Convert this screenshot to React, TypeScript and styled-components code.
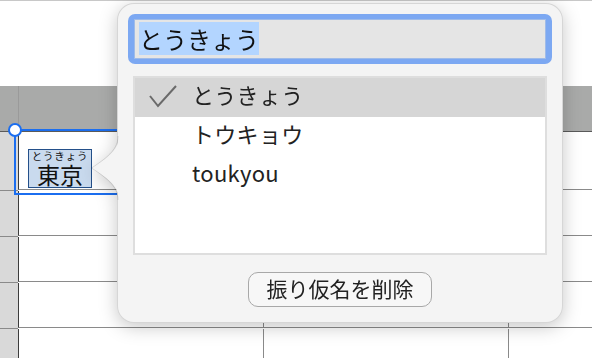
import { createGlobalStyle } from 'styled-components';
import styled from 'styled-components';

const GlobalStyle = createGlobalStyle`
  html, body {
    margin: 0;
    padding: 0;
    background: #ffffff;
    overflow: hidden;
  }
  body {
    font-family: "Noto Sans CJK JP", "Noto Sans", sans-serif;
  }
`;

const candidates = ['とうきょう', 'トウキョウ', 'toukyou'];

const App = () => {
  return (
    <Page>
      <GlobalStyle />
      <TopArea />
      <Sheet>
        <HeaderCell className="corner" />
        <HeaderCell />
        <HeaderCell />
        <HeaderCell />
        {[59, 46, 46, 46, 46].map((h, r) => (
          <Row key={r} $h={h}>
            <RowHead />
            <Cell>
              {r === 0 ? (
                <RubyBox>
                  <Reading>とうきょう</Reading>
                  <Base>東京</Base>
                </RubyBox>
              ) : null}
            </Cell>
            <Cell />
            <Cell />
          </Row>
        ))}
      </Sheet>

      <Selection />
      <Handle />

      <Popover>
        <Arrow width="28" height="64" viewBox="0 0 28 64">
          <path d="M28 0 C28 12 20 20 1 32 C20 44 28 52 28 64 Z" fill="#f4f4f4" />
          <path d="M27 0 C27 12 19 20 0.5 32 C19 44 27 52 27 64" fill="none" stroke="rgba(0,0,0,0.12)" />
        </Arrow>
        <Panel>
          <FieldRing>
            <Field>
              <Selected>とうきょう</Selected>
            </Field>
          </FieldRing>
          <List>
            {candidates.map((c, i) => (
              <Item key={c} $active={i === 0}>
                {i === 0 ? (
                  <Check width="30" height="24" viewBox="0 0 30 24">
                    <polyline points="2,11 10,21 28,1" fill="none" stroke="#6a6a6a" strokeWidth="2" />
                  </Check>
                ) : null}
                <span>{c}</span>
              </Item>
            ))}
          </List>
          <RemoveButton>振り仮名を削除</RemoveButton>
        </Panel>
      </Popover>
    </Page>
  );
};

const Page = styled.div`
  position: relative;
  width: 592px;
  height: 358px;
  overflow: hidden;
  background: #fff;
`;

const TopArea = styled.div`
  height: 85px;
  border-top: 1px solid #c8c8c8;
  background: #fff;
`;

const Sheet = styled.div`
  display: grid;
  grid-template-columns: 18px 245px 245px 1fr;
`;

const HeaderCell = styled.div`
  height: 45px;
  background: #a9aaa9;
  border-bottom: 1px solid #5a5a5a;
  border-left: 1px solid #9a9a9a;
  &.corner {
    border-left: none;
  }
`;

const Row = styled.div<{ $h: number }>`
  display: contents;
  > div {
    height: ${(p) => p.$h - 1}px;
  }
`;

const RowHead = styled.div`
  background: #d9d9d9;
  border-bottom: 1px solid #8a8a8a;
`;

const Cell = styled.div`
  background: #fff;
  border-left: 1px solid #8a8a8a;
  border-bottom: 1px solid #8a8a8a;
  padding: 9px 0 0 9px;
  box-sizing: border-box;
  &:nth-child(2) {
    border-left: 1px solid #3c3c3c;
  }
`;

const RubyBox = styled.div`
  display: inline-flex;
  flex-direction: column;
  align-items: center;
  width: 64px;
  box-sizing: border-box;
  padding-bottom: 1px;
  background: #c9daee;
  border: 1px solid #24508a;
  color: #111;
`;

const Reading = styled.span`
  font-size: 10.5px;
  line-height: 12px;
  letter-spacing: 0.8px;
`;

const Base = styled.span`
  font-size: 23px;
  line-height: 24px;
`;

const Selection = styled.div`
  position: absolute;
  left: 14px;
  top: 129px;
  width: 110px;
  height: 62px;
  border: 2px solid #1b6ef0;
`;

const Handle = styled.div`
  position: absolute;
  left: 8px;
  top: 123px;
  width: 10px;
  height: 10px;
  border-radius: 50%;
  background: #fff;
  border: 2px solid #1b6ef0;
`;

const Popover = styled.div`
  position: absolute;
  left: 117px;
  top: 3px;
  width: 446px;
  height: 320px;
  filter: drop-shadow(0 4px 9px rgba(0, 0, 0, 0.22));
`;

const Arrow = styled.svg`
  position: absolute;
  left: -26px;
  top: 133px;
  z-index: 2;
`;

const Panel = styled.div`
  box-sizing: border-box;
  height: 100%;
  background: #f4f4f4;
  border: 1px solid rgba(0, 0, 0, 0.12);
  border-radius: 17px;
  padding: 10px 10px;
  display: flex;
  flex-direction: column;
  align-items: center;
`;

const FieldRing = styled.div`
  align-self: stretch;
  background: #7ca8f2;
  border-radius: 7px;
  padding: 5px 6px 5px 6px;
  height: 50px;
  box-sizing: border-box;
`;

const Field = styled.div`
  height: 100%;
  background: #e5e5e5;
  border: 1px solid #9fbbe8;
  box-sizing: border-box;
  display: flex;
  align-items: center;
  padding-left: 4px;
`;

const Selected = styled.span`
  background: #b3d5ff;
  font-size: 24px;
  line-height: 33px;
  color: #111;
  margin-top: -2px;
`;

const List = styled.div`
  margin-top: 12px;
  width: 414px;
  height: 179px;
  box-sizing: border-box;
  background: #fff;
  border: 2px solid #dedede;
`;

const Item = styled.div<{ $active: boolean }>`
  position: relative;
  height: 39px;
  box-sizing: border-box;
  display: flex;
  align-items: center;
  padding-left: 57px;
  padding-bottom: 7px;
  background: ${(p) => (p.$active ? '#d6d6d6' : '#fff')};
  font-size: 22px;
  color: #222;
  letter-spacing: 0.3px;
`;

const Check = styled.svg`
  position: absolute;
  left: 13px;
  top: 7px;
`;

const RemoveButton = styled.button`
  margin-top: 17px;
  height: 35px;
  width: 184px;
  border-radius: 10px;
  border: 1.5px solid #a8a8a8;
  background: #f7f7f7;
  font-family: "Noto Sans CJK JP", sans-serif;
  font-size: 21px;
  color: #222;
  padding: 0 0 3px;
  line-height: 28px;
`;

export default App;
